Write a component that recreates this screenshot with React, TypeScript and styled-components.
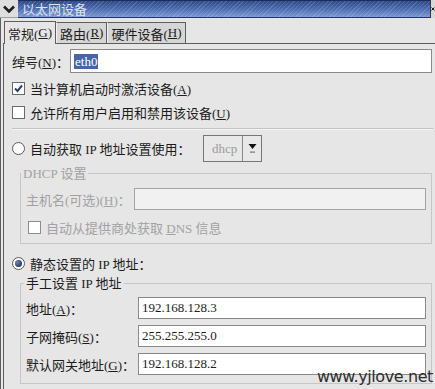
import styled, { createGlobalStyle } from "styled-components";

const GlobalStyle = createGlobalStyle`
  html, body {
    margin: 0;
    padding: 0;
  }
  body {
    background: #e6e6e6;
    font-family: "Liberation Serif", "Noto Sans CJK SC", serif;
    font-size: 13px;
    color: #1c1c1c;
  }
  * {
    box-sizing: border-box;
  }
`;

const Window = styled.div`
  position: relative;
  width: 435px;
  height: 389px;
  display: flex;
  flex-direction: column;
  overflow: hidden;
  background: #e6e6e6;
`;

const TitleBar = styled.div`
  display: flex;
  height: 18px;
  flex-shrink: 0;
`;

const MenuButton = styled.div`
  width: 18px;
  display: flex;
  align-items: center;
  justify-content: center;
  background: #dedede;
  border-bottom: 1px solid #a0a0a0;
`;

const Title = styled.div`
  flex: 1;
  display: flex;
  align-items: center;
  padding-left: 4px;
  color: #dfe3ee;
  font-size: 13px;
  line-height: 1;
  background:
    repeating-linear-gradient(135deg, rgba(255, 255, 255, 0.13) 0 1px, transparent 1px 3px),
    linear-gradient(#2c4a8a, #4f6fb2 55%, #7d98d2);
  border-top: 1px solid #1c2d58;
  border-bottom: 1px solid #22366a;
`;

const CloseButton = styled.div`
  width: 5px;
  display: flex;
  align-items: center;
  background: #d8d8d8;
  border-left: 1px solid #3a3a3a;
  overflow: hidden;
`;

const Body = styled.div`
  flex: 1;
  display: flex;
  flex-direction: column;
  padding: 3px 0 0 2px;
  border-left: 1px solid #5e5e5e;
`;

const TabBar = styled.div`
  display: flex;
  align-items: flex-end;
  height: 23px;
  padding-left: 1px;
  border-bottom: 1px solid #5e5e5e;
`;

const Tab = styled.div<{ $active?: boolean }>`
  position: relative;
  display: flex;
  align-items: center;
  height: ${p => (p.$active ? "23px" : "21px")};
  margin-bottom: ${p => (p.$active ? "-1px" : "0")};
  padding: 0 3px;
  background: ${p => (p.$active ? "#e6e6e6" : "#d6d6d6")};
  border: 1px solid #5e5e5e;
  border-bottom: none;
  border-left-color: ${p => (p.$active ? "#5e5e5e" : "#f2f2f2")};
  white-space: nowrap;
`;

const Panel = styled.div`
  flex: 1;
  display: flex;
  flex-direction: column;
  padding: 5px 3px 0 8px;
  border-left: 1px solid #5e5e5e;
`;

const FieldRow = styled.div<{ $gap?: number }>`
  display: flex;
  align-items: center;
  margin-top: ${p => p.$gap ?? 0}px;
`;

const Label = styled.span<{ $width: number; $disabled?: boolean }>`
  width: ${p => p.$width}px;
  flex-shrink: 0;
  white-space: nowrap;
  color: ${p => (p.$disabled ? "#a2a2a2" : "#1c1c1c")};
`;

const TextBox = styled.div<{ $height: number; $disabled?: boolean }>`
  flex: 1;
  height: ${p => p.$height}px;
  display: flex;
  align-items: center;
  padding-left: 3px;
  background: ${p => (p.$disabled ? "#f1f1f1" : "#ffffff")};
  border: 1px solid ${p => (p.$disabled ? "#a4a4a4" : "#8a8a8a")};
  font-family: "Liberation Serif", serif;
  font-size: 13px;
  color: #1c1c1c;
`;

const Selected = styled.span`
  background: #4866a6;
  color: #ffffff;
  padding: 0 1px;
  line-height: 15px;
`;

const CheckRow = styled.div<{ $gap?: number; $indent?: number }>`
  display: flex;
  align-items: center;
  gap: 5px;
  height: 24px;
  margin-top: ${p => p.$gap ?? 0}px;
  padding-left: ${p => p.$indent ?? 0}px;
  white-space: nowrap;
`;

const CheckBox = styled.span<{ $disabled?: boolean }>`
  width: 13px;
  height: 13px;
  flex-shrink: 0;
  display: flex;
  align-items: center;
  justify-content: center;
  background: #ffffff;
  border: 1px solid ${p => (p.$disabled ? "#8c8c8c" : "#6a6a6a")};
`;

const Radio = styled.span<{ $on?: boolean }>`
  width: 13px;
  height: 13px;
  flex-shrink: 0;
  display: flex;
  align-items: center;
  justify-content: center;
  border-radius: 50%;
  background: #ffffff;
  border: 1px solid #5a5a5a;

  &::after {
    content: "";
    display: ${p => (p.$on ? "block" : "none")};
    width: 7px;
    height: 7px;
    border-radius: 50%;
    background: radial-gradient(circle at 35% 35%, #6f84b8, #263a6c 70%);
  }
`;

const RowText = styled.span<{ $disabled?: boolean }>`
  color: ${p => (p.$disabled ? "#a2a2a2" : "#1c1c1c")};
`;

const Separator = styled.div`
  margin-top: 4px;
  border-top: 1px solid #c3c3c3;
  border-bottom: 1px solid #f4f4f4;
  margin-right: -1px;
`;

const RadioRow = styled.div<{ $gap: number; $height: number }>`
  display: flex;
  align-items: center;
  height: ${p => p.$height}px;
  margin-top: ${p => p.$gap}px;
  white-space: nowrap;
`;

const RadioLabel = styled.span`
  display: flex;
  align-items: center;
  gap: 5px;
  width: 191px;
`;

const Combo = styled.div`
  display: flex;
  width: 59px;
  height: 27px;
  border: 1px solid #767676;
  background: #e8e8e8;
`;

const ComboText = styled.span`
  flex: 1;
  display: flex;
  align-items: center;
  padding-left: 8px;
  color: #9c9c9c;
  font-family: "Liberation Serif", serif;
`;

const ComboArrow = styled.span`
  width: 19px;
  display: flex;
  align-items: center;
  justify-content: center;
  border-left: 1px solid #8a8a8a;
`;

const Group = styled.fieldset<{ $gap: number; $bottom: number; $top: number }>`
  margin: ${p => p.$gap}px 0 0 8px;
  padding: ${p => p.$top}px 5px ${p => p.$bottom}px 5px;
  border: 1px solid #c6c6c6;
  min-width: 0;
`;

const Legend = styled.legend<{ $disabled?: boolean; $shift: number }>`
  margin-left: ${p => p.$shift}px;
  padding: 0 2px;
  line-height: 15px;
  height: 15px;
  color: ${p => (p.$disabled ? "#a2a2a2" : "#1c1c1c")};
  white-space: nowrap;
`;

const Watermark = styled.div`
  position: absolute;
  right: 2px;
  bottom: 3px;
  font-family: "DejaVu Sans", sans-serif;
  font-size: 16px;
  letter-spacing: -0.4px;
  color: #2e2e2e;
`;

const Chevron = () => (
  <svg width="12" height="8" viewBox="0 0 12 8">
    <polyline points="1,1.5 6,6.5 11,1.5" fill="none" stroke="#1e1e1e" strokeWidth="2.6" />
  </svg>
);

const Check = () => (
  <svg width="11" height="11" viewBox="0 0 11 11">
    <polyline points="2,5.5 4.5,8 9,2.5" fill="none" stroke="#2b3e70" strokeWidth="2" />
  </svg>
);

const DownArrow = () => (
  <svg width="9" height="11" viewBox="0 0 9 11">
    <polygon points="0.5,1 8.5,1 4.5,6" fill="#111" />
    <rect x="2" y="8.5" width="5" height="1.2" fill="#777" />
  </svg>
);

const App = () => {
  return (
    <Window>
      <GlobalStyle />
      <TitleBar>
        <MenuButton>
          <Chevron />
        </MenuButton>
        <Title>以太网设备</Title>
        <CloseButton>
          <svg width="8" height="10" viewBox="0 0 8 10">
            <path d="M1 2 L7 8 M7 2 L1 8" stroke="#222" strokeWidth="2" />
          </svg>
        </CloseButton>
      </TitleBar>

      <Body>
        <TabBar>
          <Tab $active>
            常规(<u>G</u>)
          </Tab>
          <Tab>
            路由(<u>R</u>)
          </Tab>
          <Tab>
            硬件设备(<u>H</u>)
          </Tab>
        </TabBar>

        <Panel>
          <FieldRow>
            <Label $width={58}>
              绰号(<u>N</u>)：
            </Label>
            <TextBox $height={24}>
              <Selected>eth0</Selected>
            </TextBox>
          </FieldRow>

          <CheckRow $gap={3}>
            <CheckBox>
              <Check />
            </CheckBox>
            <RowText>
              当计算机启动时激活设备(<u>A</u>)
            </RowText>
          </CheckRow>
          <CheckRow>
            <CheckBox />
            <RowText>
              允许所有用户启用和禁用该设备(<u>U</u>)
            </RowText>
          </CheckRow>

          <Separator />

          <RadioRow $gap={5} $height={27}>
            <RadioLabel>
              <Radio />
              <RowText>自动获取 IP 地址设置使用：</RowText>
            </RadioLabel>
            <Combo>
              <ComboText>dhcp</ComboText>
              <ComboArrow>
                <DownArrow />
              </ComboArrow>
            </Combo>
          </RadioRow>

          <Group $gap={4} $top={7} $bottom={4}>
            <Legend $disabled $shift={-5}>
              DHCP 设置
            </Legend>
            <FieldRow>
              <Label $width={108} $disabled>
                主机名(可选)(<u>H</u>)：
              </Label>
              <TextBox $height={22} $disabled />
            </FieldRow>
            <CheckRow $gap={5} $indent={2}>
              <CheckBox $disabled />
              <RowText $disabled>
                自动从提供商处获取 <u>D</u>NS 信息
              </RowText>
            </CheckRow>
          </Group>

          <RadioRow $gap={7} $height={24}>
            <RadioLabel>
              <Radio $on />
              <RowText>静态设置的 IP 地址：</RowText>
            </RadioLabel>
          </RadioRow>

          <Group $gap={1} $top={6} $bottom={8}>
            <Legend $shift={-2}>手工设置 IP 地址</Legend>
            <FieldRow>
              <Label $width={112}>
                地址(<u>A</u>)：
              </Label>
              <TextBox $height={22}>192.168.128.3</TextBox>
            </FieldRow>
            <FieldRow $gap={6}>
              <Label $width={112}>
                子网掩码(<u>S</u>)：
              </Label>
              <TextBox $height={22}>255.255.255.0</TextBox>
            </FieldRow>
            <FieldRow $gap={6}>
              <Label $width={112}>
                默认网关地址(<u>G</u>)：
              </Label>
              <TextBox $height={22}>192.168.128.2</TextBox>
            </FieldRow>
          </Group>
        </Panel>
      </Body>

      <Watermark>www.yjlove.net</Watermark>
    </Window>
  );
};

export default App;
